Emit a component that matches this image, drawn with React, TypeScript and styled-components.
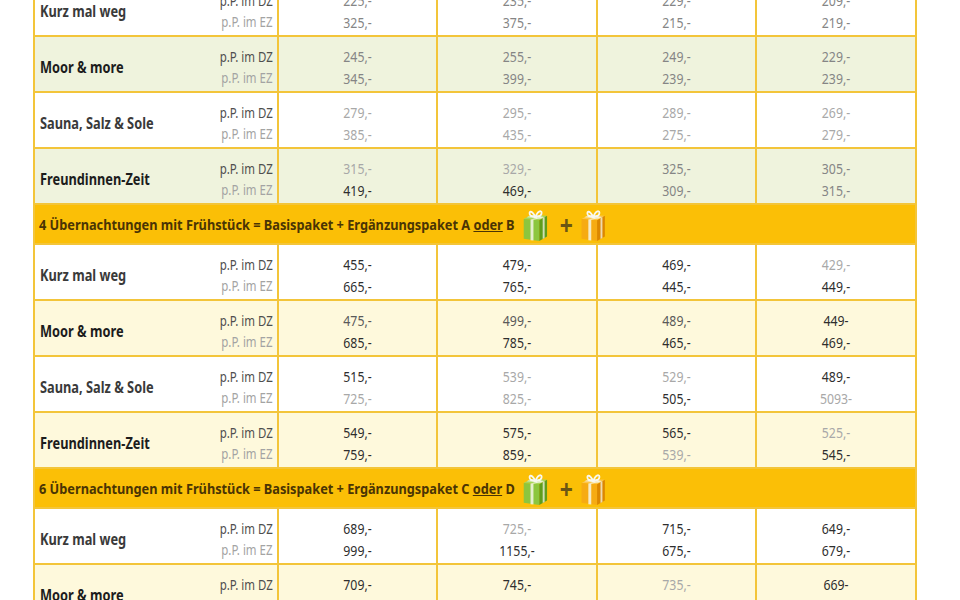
import React from 'react';
import styled, { createGlobalStyle, css } from 'styled-components';

type Tone = 'd' | 's' | 'm' | 'l';
type Price = [string, Tone];
type Row = {
  name: string;
  strong: boolean;
  bg: string;
  prices: [Price, Price][];
};
type Section = {
  nights?: number;
  extras?: [string, string];
  rows: Row[];
};

const GREEN = '#eff3dd';
const CREAM = '#fef9dc';
const WHITE = '#ffffff';

const tones: Record<Tone, string> = {
  d: '#2e2e2e',
  s: '#5a5a5a',
  m: '#858585',
  l: '#a8a8a8',
};

const sections: Section[] = [
  {
    rows: [
      {
        name: 'Kurz mal weg', strong: false, bg: WHITE,
        prices: [
          [['225,-', 'm'], ['325,-', 'm']],
          [['235,-', 'm'], ['375,-', 'm']],
          [['229,-', 'm'], ['215,-', 'm']],
          [['209,-', 'm'], ['219,-', 'm']],
        ],
      },
      {
        name: 'Moor & more', strong: true, bg: GREEN,
        prices: [
          [['245,-', 'm'], ['345,-', 'm']],
          [['255,-', 'm'], ['399,-', 'm']],
          [['249,-', 'm'], ['239,-', 'm']],
          [['229,-', 'm'], ['239,-', 'm']],
        ],
      },
      {
        name: 'Sauna, Salz & Sole', strong: false, bg: WHITE,
        prices: [
          [['279,-', 'l'], ['385,-', 'l']],
          [['295,-', 'l'], ['435,-', 'l']],
          [['289,-', 'l'], ['275,-', 'l']],
          [['269,-', 'l'], ['279,-', 'l']],
        ],
      },
      {
        name: 'Freundinnen-Zeit', strong: true, bg: GREEN,
        prices: [
          [['315,-', 'l'], ['419,-', 'd']],
          [['329,-', 'l'], ['469,-', 'd']],
          [['325,-', 'm'], ['309,-', 'm']],
          [['305,-', 'm'], ['315,-', 'm']],
        ],
      },
    ],
  },
  {
    nights: 4,
    extras: ['A', 'B'],
    rows: [
      {
        name: 'Kurz mal weg', strong: false, bg: WHITE,
        prices: [
          [['455,-', 'd'], ['665,-', 'd']],
          [['479,-', 'd'], ['765,-', 'd']],
          [['469,-', 'd'], ['445,-', 'd']],
          [['429,-', 'l'], ['449,-', 'd']],
        ],
      },
      {
        name: 'Moor & more', strong: true, bg: CREAM,
        prices: [
          [['475,-', 's'], ['685,-', 'd']],
          [['499,-', 's'], ['785,-', 'd']],
          [['489,-', 's'], ['465,-', 'd']],
          [['449-', 'd'], ['469,-', 'd']],
        ],
      },
      {
        name: 'Sauna, Salz & Sole', strong: false, bg: WHITE,
        prices: [
          [['515,-', 'd'], ['725,-', 'l']],
          [['539,-', 'l'], ['825,-', 'l']],
          [['529,-', 'l'], ['505,-', 'd']],
          [['489,-', 'd'], ['5093-', 'l']],
        ],
      },
      {
        name: 'Freundinnen-Zeit', strong: true, bg: CREAM,
        prices: [
          [['549,-', 'd'], ['759,-', 'd']],
          [['575,-', 'd'], ['859,-', 'd']],
          [['565,-', 'd'], ['539,-', 'l']],
          [['525,-', 'l'], ['545,-', 'd']],
        ],
      },
    ],
  },
  {
    nights: 6,
    extras: ['C', 'D'],
    rows: [
      {
        name: 'Kurz mal weg', strong: false, bg: WHITE,
        prices: [
          [['689,-', 'd'], ['999,-', 'd']],
          [['725,-', 'l'], ['1155,-', 'd']],
          [['715,-', 'd'], ['675,-', 'd']],
          [['649,-', 'd'], ['679,-', 'd']],
        ],
      },
      {
        name: 'Moor & more', strong: true, bg: CREAM,
        prices: [
          [['709,-', 'd'], ['1019,-', 'd']],
          [['745,-', 'd'], ['1095,-', 'd']],
          [['735,-', 'l'], ['695,-', 'd']],
          [['669-', 'd'], ['699,-', 'd']],
        ],
      },
    ],
  },
];

// no condensed face is installed, so narrow the glyphs by hand
const narrow = (factor: number, origin: string) => css`
  transform: scaleX(${factor});
  transform-origin: ${origin} center;
`;

const GlobalStyle = createGlobalStyle`
  html, body {
    margin: 0;
    padding: 0;
    background: #ffffff;
  }
  body {
    font-family: 'Noto Sans', 'Open Sans', 'DejaVu Sans', sans-serif;
    overflow: hidden;
  }
`;

const Page = styled.div`
  height: 600px;
  overflow: hidden;
  padding-left: 33px;
`;

// the page is scrolled down a little, so the first row starts above the window
const Table = styled.table`
  border-collapse: collapse;
  table-layout: fixed;
  width: 882px;
  margin-top: -21px;
`;

const Tr = styled.tr<{ $bg: string }>`
  background: ${(p) => p.$bg};
`;

const Td = styled.td`
  border: 2px solid #f3c53a;
  height: 48px;
  padding: 6px 0 0;
  vertical-align: middle;
`;

const LabelInner = styled.div`
  display: flex;
  align-items: center;
  justify-content: space-between;
  padding: 0 4px 0 5px;
`;

const Name = styled.span<{ $strong: boolean }>`
  display: inline-block;
  font-size: 16px;
  font-weight: 700;
  white-space: nowrap;
  color: ${(p) => (p.$strong ? '#1c1c1c' : '#3a3a3a')};
  ${narrow(0.8, 'left')}
`;

const RoomTypes = styled.div`
  display: flex;
  flex-direction: column;
  align-items: flex-end;
`;

const RoomType = styled.span<{ $light: boolean }>`
  font-size: 14px;
  line-height: 21px;
  white-space: nowrap;
  color: ${(p) => (p.$light ? '#a3a3a3' : '#4e4e4e')};
  ${narrow(0.82, 'right')}
`;

const PriceTd = styled(Td)`
  text-align: center;
`;

const PriceLine = styled.div<{ $tone: Tone }>`
  font-size: 15px;
  line-height: 22px;
  color: ${(p) => tones[p.$tone]};
  ${narrow(0.82, 'center')}
`;

const HeaderTd = styled.td`
  background: #fbbf06;
  border: 2px solid #f3c53a;
  height: 38px;
  padding: 0 4px;
`;

const HeaderInner = styled.div`
  display: flex;
  align-items: center;
  gap: 8px;
  font-size: 15px;
  font-weight: 700;
  white-space: nowrap;
  color: #4a3404;
  ${narrow(0.85, 'left')}
`;

const Oder = styled.span`
  text-decoration: underline;
`;

const Plus = styled.span`
  font-size: 27px;
  font-weight: 700;
  color: #6b5614;
  line-height: 1;
  margin-left: 5px;
`;

type GiftProps = { front: string; side: string; top: string };

// drawn a little wider, the header row narrows it back
const Gift: React.FC<GiftProps> = ({ front, side, top }) => (
  <svg width="32" height="35" viewBox="0 0 28 32" preserveAspectRatio="none">
    <polygon points="2,11 10,7 26,8 18,12" fill={top} />
    <polygon points="2,11 18,12 18,31 2,29" fill={front} />
    <polygon points="18,12 26,8 26,27 18,31" fill={side} />
    <polygon points="9,11.5 12,11.7 12,30.6 9,30.4" fill="#f4f6e8" opacity="0.85" />
    <polygon points="21.5,10.3 23.5,9.3 23.5,28.3 21.5,29.3" fill="#f4f6e8" opacity="0.75" />
    <polygon points="9,11.5 12,11.7 23.5,9.3 20.5,8.6" fill="#f4f6e8" opacity="0.85" />
    <polygon points="5,9.4 7,8.4 22,9.8 19.5,10.8" fill="#f4f6e8" opacity="0.7" />
    <path d="M14 9 C10 2 6 4 9 8 Z" fill="none" stroke="#f8f8f0" strokeWidth="1.8" />
    <path d="M14 9 C18 1 23 4 19 8 Z" fill="none" stroke="#f8f8f0" strokeWidth="1.8" />
  </svg>
);

const SectionHeader: React.FC<{ nights: number; extras: [string, string] }> = ({ nights, extras }) => (
  <tr>
    <HeaderTd colSpan={5}>
      <HeaderInner>
        <span>
          {nights}
          {' Übernachtungen mit Frühstück = Basispaket + Ergänzungspaket '}
          {extras[0]}
          {' '}
          <Oder>oder</Oder>
          {' '}
          {extras[1]}
        </span>
        <Gift front="#8cc63e" side="#5e9d1c" top="#a6d65a" />
        <Plus>+</Plus>
        <Gift front="#f6ab12" side="#dc8700" top="#fcc54a" />
      </HeaderInner>
    </HeaderTd>
  </tr>
);

const PriceRow: React.FC<{ row: Row }> = ({ row }) => (
  <Tr $bg={row.bg}>
    <Td>
      <LabelInner>
        <Name $strong={row.strong}>{row.name}</Name>
        <RoomTypes>
          <RoomType $light={false}>p.P. im DZ</RoomType>
          <RoomType $light>p.P. im EZ</RoomType>
        </RoomTypes>
      </LabelInner>
    </Td>
    {row.prices.map(([dz, ez], i) => (
      <PriceTd key={i}>
        <PriceLine $tone={dz[1]}>{dz[0]}</PriceLine>
        <PriceLine $tone={ez[1]}>{ez[0]}</PriceLine>
      </PriceTd>
    ))}
  </Tr>
);

const App: React.FC = () => (
  <>
    <GlobalStyle />
    <Page>
      <Table>
        <colgroup>
          <col style={{ width: 244 }} />
          <col style={{ width: 159 }} />
          <col style={{ width: 160 }} />
          <col style={{ width: 159 }} />
          <col style={{ width: 160 }} />
        </colgroup>
        <tbody>
          {sections.map((section, si) => (
            <React.Fragment key={si}>
              {section.nights && section.extras && (
                <SectionHeader nights={section.nights} extras={section.extras} />
              )}
              {section.rows.map((row) => (
                <PriceRow key={`${si}-${row.name}`} row={row} />
              ))}
            </React.Fragment>
          ))}
        </tbody>
      </Table>
    </Page>
  </>
);

export default App;
